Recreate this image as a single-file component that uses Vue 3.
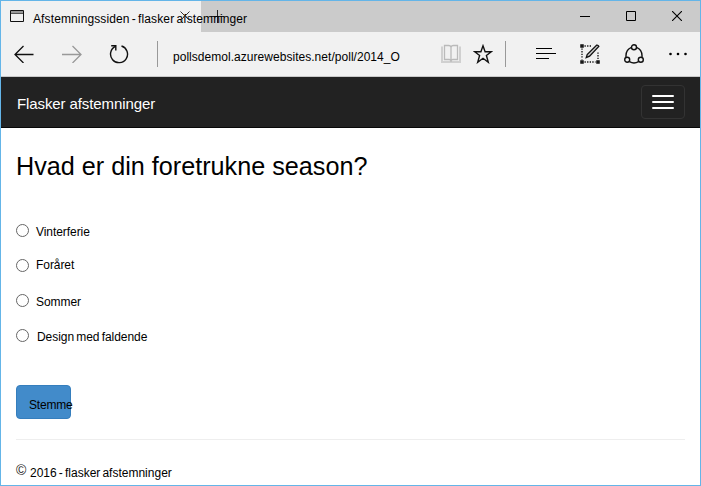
<script setup>
import { ref } from 'vue'

const seasons = [
  { id: 'winter', label: 'Vinterferie' },
  { id: 'spring', label: 'Foråret' },
  { id: 'summer', label: 'Sommer' },
  { id: 'fall', label: 'Design med faldende' },
]
const choice = ref('')
</script>

<template>
  <div class="window">
    <div class="tabs">
      <div class="tab">
        <svg class="page-icon" width="14" height="12" viewBox="0 0 14 12" fill="none">
          <path d="M1 2h12" stroke="#999" stroke-width="2" />
          <path d="M.5.5h13v11H.5z" stroke="#111" />
          <path d="M1 3.500h12" stroke="#555" />
        </svg>
        <span class="tab-title">Afstemningssiden - flasker afstemninger</span>
        <svg class="tab-close" width="10" height="10" viewBox="0 0 10 10"><path d="M.5.5l9 9M9.500.500l-9 9" stroke="#333" /></svg>
      </div>
      <svg class="tab-add" width="13" height="13" viewBox="0 0 13 13"><path d="M6.500 0v13M0 6.500h13" stroke="#222" /></svg>
      <div class="controls">
        <svg width="10" height="10" viewBox="0 0 10 10"><path d="M0 5.500h10" stroke="#000" /></svg>
        <svg width="10" height="10" viewBox="0 0 10 10"><path d="M.5.5h9v9h-9z" fill="none" stroke="#000" /></svg>
        <svg width="10" height="10" viewBox="0 0 10 10"><path d="M0 0l10 10M10 0L0 10" stroke="#000" stroke-width="1.100" /></svg>
      </div>
    </div>

    <div class="toolbar">
      <svg class="back" width="20" height="18" viewBox="0 0 20 18" fill="none" stroke="#111" stroke-width="1.300"><path d="M9.500 1L1 9.500 9.500 18M1 9.500h18.500" /></svg>
      <svg class="forward" width="20" height="18" viewBox="0 0 20 18" fill="none" stroke="#999" stroke-width="1.300"><path d="M10.500 1L19 9.500 10.500 18M19 9.500H0" /></svg>
      <svg class="reload" width="20" height="20" viewBox="0 0 20 20" fill="none" stroke="#111" stroke-width="1.400"><path d="M12.500 2A8.500 8.500 0 1 1 6.500 2.400" /><path d="M2.200 1.700h4.600v4.800" /></svg>
      <i class="rule first"></i>
      <span class="url">pollsdemol.azurewebsites.net/poll/2014_O</span>
      <svg class="book" width="20" height="20" viewBox="0 0 20 20" fill="none"><path d="M1 2.500v15.500h18V2.500" stroke="#d0d0d0" stroke-width="2" /><path d="M3.500 15.500v-14h4Q10 1.500 10 3.500q0-2 2.500-2h4v14H12q-2 0-2 2 0-2-2-2zM10 3v15" stroke="#bababa" stroke-width="1.300" /></svg>
      <svg class="star" width="20" height="20" viewBox="0 0 20 20" fill="none" stroke="#111" stroke-width="1.400"><path d="M10 1.800l2.100 5.900h6.200l-4.900 3.800 1.900 6.800-5.300-4-5.300 4 1.900-6.800-4.900-3.800h6.200z" /></svg>
      <i class="rule second"></i>
      <svg class="hub" width="20" height="14" viewBox="0 0 20 14"><path d="M0 1.500h16M0 6.500h20M0 11.500h13" stroke="#000" stroke-width="1.200" /></svg>
      <svg class="note" width="20" height="20" viewBox="0 0 20 20" fill="none" stroke="#111">
        <path d="M4.500 2H12M2 4.500v11M4.500 18h11M18 8.500v7" stroke-width="1.300" stroke-dasharray="1.300 1.300" />
        <path d="M1 1h2v2H1zM1 17h2v2H1zM17 17h2v2h-2z" fill="#777" stroke-width="1.500" />
        <path d="M6.200 13.700l1-3.200L16.500 1.200q1.500-.5 2.300 1.200l-9.200 9.800z" fill="#ccc" stroke-width="1.300" />
      </svg>
      <svg class="share" width="20" height="20" viewBox="0 0 20 20" fill="none" stroke="#111" stroke-width="1.400"><path d="M7.500 3.300Q1.500 5.500 2 13M12.500 3.300q6 2.200 5.500 9.700M5.500 17.700q4.500 2.600 9 0" /><circle cx="10" cy="3.200" r="2.500" /><circle cx="3.200" cy="15.700" r="2.500" /><circle cx="16.800" cy="15.700" r="2.500" /></svg>
      <svg class="more" width="20" height="4" viewBox="0 0 20 4"><circle cx="2.500" cy="2" r="1.300" /><circle cx="10" cy="2" r="1.300" /><circle cx="17.500" cy="2" r="1.300" /></svg>
    </div>

    <header class="navbar">
      <span class="brand">Flasker afstemninger</span>
      <button class="toggle" type="button"><i></i><i></i><i></i></button>
    </header>

    <main>
      <h1>Hvad er din foretrukne season?</h1>
      <form @submit.prevent>
        <label v-for="s in seasons" :key="s.id" :class="s.id">
          <input v-model="choice" type="radio" name="season" :value="s.id" />
          <span>{{ s.label }}</span>
        </label>
        <button class="vote" type="submit"><span>Stemme</span></button>
      </form>
      <hr />
      <footer><span class="copyright">©</span><span class="owner">2016 - flasker afstemninger</span></footer>
    </main>
  </div>
</template>

<style>
body { margin: 0; overflow: hidden; }
</style>

<style scoped>
.window { box-sizing: border-box; width: 701px; height: 486px; border: 1px solid #64b5e8; background: #fff; color: #000; font: 12px/16px "Liberation Sans", Arial, sans-serif; overflow: hidden; }
svg { display: block; flex: none; }
.tabs { display: flex; height: 31px; background: #cbcbcb; }
.tab { display: flex; width: 200px; height: 31px; background: #f1f1f1; flex: none; position: relative; }
.page-icon { margin: 9px 0 0 9px; }
.tab-title { margin: 10px 0 0 9px; white-space: nowrap; letter-spacing: .12px; word-spacing: -1.3px; position: relative; z-index: 1; }
.tab-close { position: absolute; left: 179px; top: 10px; z-index: 2; }
.tab-add { margin: 9px 0 0 10px; }
.controls { display: flex; gap: 36px; margin: 10px 18px 0 auto; }
.toolbar { display: flex; align-items: center; height: 44px; background: #f1f1f1; border-bottom: 1px solid #c9c9c9; }
.back { margin-left: 13px; }
.forward { margin-left: 28px; }
.reload { margin-left: 27px; }
.rule { width: 1px; height: 26px; background: #999; flex: none; }
.first { margin-left: 28px; }
.url { width: 268px; margin: 6px 0 0 15px; white-space: nowrap; letter-spacing: .035px; }
.star { margin-left: 12px; }
.second { margin-left: 12px; }
.hub { margin-left: 30px; }
.note { margin-left: 24px; }
.share { margin-left: 24px; }
.more { margin-left: 24px; }
.navbar { box-sizing: border-box; display: flex; align-items: center; justify-content: space-between; height: 51px; padding: 0 15px 0 16px; background: #222; border-bottom: 1px solid #080808; }
.brand { color: #fff; font-size: 15px; line-height: 20px; padding-top: 3px; letter-spacing: -.1px; }
.toggle { box-sizing: border-box; display: flex; flex-direction: column; align-items: center; justify-content: center; gap: 4px; width: 44px; height: 34px; padding: 0; border: 1px solid #333; border-radius: 4px; background: transparent; }
.toggle i { width: 22px; height: 2px; background: #fff; border-radius: 1px; }
main { padding: 0 15px; }
h1 { margin: 0; padding-top: 22px; height: 74px; box-sizing: content-box; font-size: 25.2px; line-height: 32px; font-weight: 400; white-space: nowrap; }
form { display: flex; flex-direction: column; align-items: flex-start; }
label { display: flex; align-items: flex-start; height: 35px; letter-spacing: -.06px; word-spacing: -1px; }
input { appearance: none; box-sizing: border-box; width: 13px; height: 13px; margin: 0; border: 1px solid #666; border-radius: 50%; background: #fff; }
label span { margin: 0 0 0 7px; }
.spring span { margin-top: -2px; }
.fall span { margin-left: 8px; }
.vote { box-sizing: border-box; display: flex; width: 55px; height: 34px; margin-top: 21px; padding: 11px 0 0 12px; border: 1px solid #357ebd; border-radius: 4px; background: #428bca; color: #000; font: inherit; letter-spacing: -.2px; white-space: nowrap; }
hr { height: 1px; margin: 20px 0 0; border: 0; background: #eee; }
footer { display: flex; margin-top: 23px; white-space: nowrap; }
.copyright { width: 14px; font-size: 14px; line-height: 15px; color: #222; }
.owner { margin-top: 2px; word-spacing: -1.2px; }
</style>
